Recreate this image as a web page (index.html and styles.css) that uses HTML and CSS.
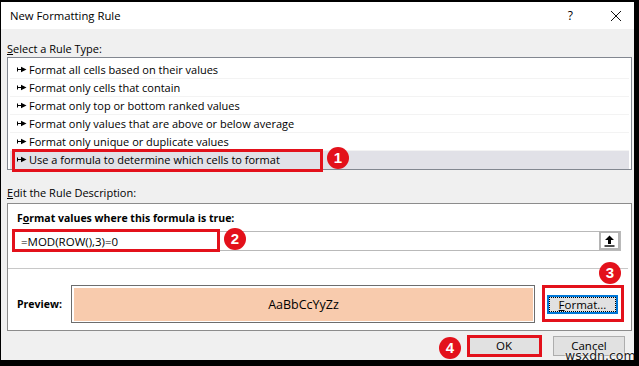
FILE: index.html
```html
<!DOCTYPE html>
<html lang="en">
<head>
    <meta charset="UTF-8">
    <meta name="viewport" content="width=device-width, initial-scale=1.0">
    <title>New Formatting Rule</title>
    <link rel="stylesheet" href="styles.css">
</head>
<body>
    <div class="dialog">
        <div class="titlebar">
            <span class="title">New Formatting Rule</span>
            <span class="help">?</span>
            <span class="close">
                <svg width="12" height="12" viewBox="0 0 12 12"><path d="M1 1 L11 11 M11 1 L1 11" stroke="#111" stroke-width="1" fill="none"/></svg>
            </span>
        </div>
        <div class="content">
            <div class="section-label"><u>S</u>elect a Rule Type:</div>
            <ul class="rule-list">
                <li><svg class="arrow" width="10" height="9" viewBox="0 0 10 9"><path d="M0.5 2.5 V6.5 M0.5 4.5 H5" stroke="#000" stroke-width="1"/><path d="M4 1.8 L9.5 4.5 L4 7.2 Z" fill="#000"/></svg>Format all cells based on their values</li>
                <li><svg class="arrow" width="10" height="9" viewBox="0 0 10 9"><path d="M0.5 2.5 V6.5 M0.5 4.5 H5" stroke="#000" stroke-width="1"/><path d="M4 1.8 L9.5 4.5 L4 7.2 Z" fill="#000"/></svg>Format only cells that contain</li>
                <li><svg class="arrow" width="10" height="9" viewBox="0 0 10 9"><path d="M0.5 2.5 V6.5 M0.5 4.5 H5" stroke="#000" stroke-width="1"/><path d="M4 1.8 L9.5 4.5 L4 7.2 Z" fill="#000"/></svg>Format only top or bottom ranked values</li>
                <li><svg class="arrow" width="10" height="9" viewBox="0 0 10 9"><path d="M0.5 2.5 V6.5 M0.5 4.5 H5" stroke="#000" stroke-width="1"/><path d="M4 1.8 L9.5 4.5 L4 7.2 Z" fill="#000"/></svg>Format only values that are above or below average</li>
                <li><svg class="arrow" width="10" height="9" viewBox="0 0 10 9"><path d="M0.5 2.5 V6.5 M0.5 4.5 H5" stroke="#000" stroke-width="1"/><path d="M4 1.8 L9.5 4.5 L4 7.2 Z" fill="#000"/></svg>Format only unique or duplicate values</li>
                <li class="selected"><svg class="arrow" width="10" height="9" viewBox="0 0 10 9"><path d="M0.5 2.5 V6.5 M0.5 4.5 H5" stroke="#000" stroke-width="1"/><path d="M4 1.8 L9.5 4.5 L4 7.2 Z" fill="#000"/></svg>Use a formula to determine which cells to format</li>
            </ul>
            <div class="section-label edit-label"><u>E</u>dit the Rule Description:</div>
            <div class="group">
                <div class="group-label">F<u>o</u>rmat values where this formula is true:</div>
                <div class="formula-input">
                    <span class="formula-text">=MOD(ROW(),3)=0</span>
                    <span class="collapse-btn">
                        <svg width="11" height="12" viewBox="0 0 11 12"><path d="M5.5 0.5 L10 5 H7 V9 H4 V5 H1 Z" fill="#000"/><path d="M0.5 11 H10.5" stroke="#000" stroke-width="1.4"/></svg>
                    </span>
                </div>
                <div class="separator"></div>
                <div class="preview-row">
                    <span class="preview-label">Preview:</span>
                    <div class="preview-box">
                        <div class="preview-fill">AaBbCcYyZz</div>
                    </div>
                    <button type="button" class="btn btn-format"><span class="focus"><u>F</u>ormat...</span></button>
                </div>
            </div>
            <div class="footer">
                <button type="button" class="btn btn-ok">OK</button>
                <button type="button" class="btn btn-cancel">Cancel</button>
            </div>
        </div>

        <div class="mark box-1"></div>
        <div class="badge badge-1">1</div>
        <div class="mark box-2"></div>
        <div class="badge badge-2">2</div>
        <div class="mark box-3"></div>
        <div class="badge badge-3">3</div>
        <div class="mark box-4"></div>
        <div class="badge badge-4">4</div>
        <div class="watermark">wsxdn.com</div>
    </div>
</body>
</html>
```

FILE: styles.css
```css
body {
    margin: 0;
    background: #000;
    font-family: "Open Sans", "Noto Sans", sans-serif;
    font-size: 11px;
    color: #000;
}
.dialog {
    position: relative;
    margin: 2px 0 0 1px;
    width: 633px;
    height: 358px;
    background: #f0f0f0;
    overflow: hidden;
}
.titlebar {
    display: flex;
    align-items: center;
    height: 27px;
    background: #fff;
    padding-left: 9px;
}
.title {
    flex: 1;
    font-size: 11.3px;
}
.help {
    font-size: 12px;
    margin-right: 37px;
}
.close {
    display: flex;
    margin-right: 12px;
}
.content {
    padding: 0 2px 0 6px;
}
.section-label {
    height: 16px;
    line-height: 16px;
    margin-top: 12px;
}
.edit-label {
    margin-top: 15px;
}
.rule-list {
    list-style: none;
    margin: 0;
    padding: 3px 0 0 0;
    background: #fff;
    border: 1px solid #828790;
}
.rule-list li {
    display: flex;
    align-items: center;
    height: 17px;
    margin: 0 2px;
    padding-left: 7px;
    border-bottom: 1px solid #f3f3f3;
}
.rule-list li.selected {
    background: #e1e1e7;
    border-bottom: 1px solid #e1e1e7;
}
.arrow {
    margin-right: 2px;
}
.group {
    margin-top: 2px;
    background: #fff;
    border: 1px solid #8c8c8c;
    padding-bottom: 7px;
}
.group-label {
    font-weight: bold;
    font-size: 10.5px;
    height: 16px;
    line-height: 16px;
    margin: 6px 0 0 9px;
}
.formula-input {
    display: flex;
    align-items: center;
    justify-content: space-between;
    height: 18px;
    margin: 5px 10px 0 5px;
    border: 1px solid #b9b9b9;
    background: #fff;
}
.formula-text {
    padding-left: 7px;
    font-size: 11.5px;
}
.collapse-btn {
    display: flex;
    align-items: center;
    justify-content: center;
    width: 17px;
    height: 15px;
    border: 2px solid #b4b4b4;
    margin-top: -1px;
}
.separator {
    height: 1px;
    background: #c8c8c8;
    margin: 17px 3px 0 0;
}
.preview-row {
    display: flex;
    align-items: center;
    margin-top: 16px;
    padding-left: 9px;
}
.preview-label {
    font-weight: bold;
    font-size: 10.5px;
    width: 54px;
}
.preview-box {
    width: 459px;
    border: 1px solid #6d6d6d;
    padding: 2px 1px 1px 2px;
}
.preview-fill {
    height: 33px;
    line-height: 33px;
    background: #f8cbad;
    text-align: center;
    font-size: 12.5px;
}
.btn {
    font-family: inherit;
    font-size: 11.5px;
    background: #e1e1e1;
    border: 1px solid #adadad;
    padding: 0;
    color: #000;
}
.btn-format {
    margin-left: 12px;
    width: 71px;
    height: 19px;
    border: 2px solid #0078d7;
    display: flex;
    align-items: stretch;
}
.btn-format .focus {
    flex: 1;
    border: 1px dotted #000;
    line-height: 13px;
}
.footer {
    display: flex;
    justify-content: flex-end;
    gap: 13px;
    margin-top: 5px;
    padding-right: 7px;
}
.btn-ok,
.btn-cancel {
    width: 72px;
    height: 20px;
    line-height: 16px;
}
.mark {
    position: absolute;
    border: 3px solid #e3111b;
}
.box-1 { left: 11px; top: 147px; width: 305px; height: 17px; }
.box-2 { left: 11px; top: 227px; width: 202px; height: 17px; }
.box-3 { left: 541px; top: 283px; width: 76px; height: 31px; }
.box-4 { left: 466px; top: 333px; width: 69px; height: 16px; }
.badge {
    position: absolute;
    width: 22px;
    height: 22px;
    border-radius: 50%;
    background: #e3111b;
    color: #fff;
    font-family: "Liberation Sans", Arial, sans-serif;
    font-weight: bold;
    font-size: 15px;
    line-height: 22px;
    text-align: center;
}
.badge-1 { left: 326px; top: 145px; }
.badge-2 { left: 223px; top: 226px; }
.badge-3 { left: 598px; top: 260px; }
.badge-4 { left: 438px; top: 335px; }
.watermark {
    position: absolute;
    left: 564px;
    top: 347px;
    font-family: "DejaVu Sans", sans-serif;
    font-size: 12.5px;
    line-height: 14px;
    color: #222;
    text-shadow: 0 0 2px #fff, 0 0 2px #fff;
}
```
